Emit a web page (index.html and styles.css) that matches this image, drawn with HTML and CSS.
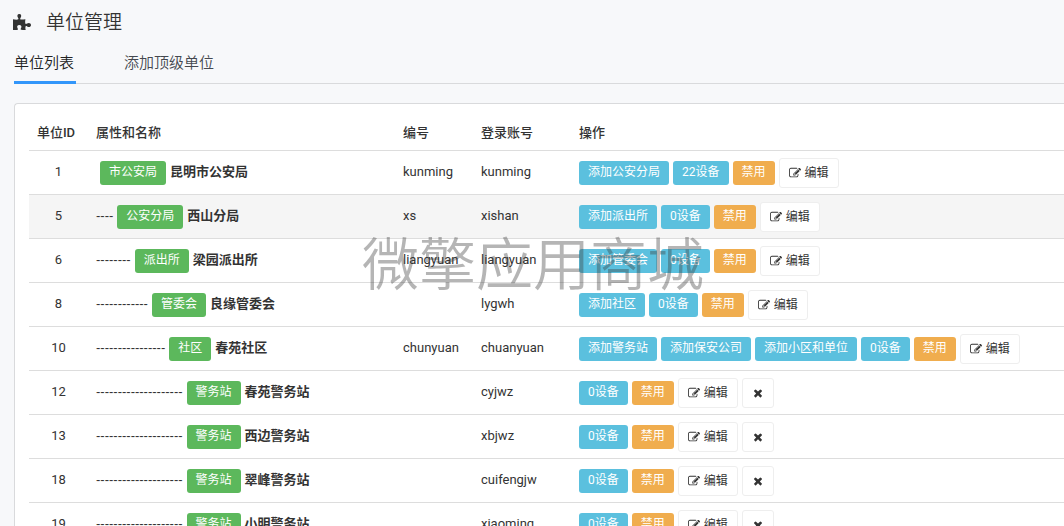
FILE: index.html
```
<!DOCTYPE html>
<html lang="zh-CN">
<head>
<meta charset="utf-8">
<title>单位管理</title>
<link rel="stylesheet" href="styles.css">
</head>
<body>
<svg class="sprite" aria-hidden="true">
  <symbol id="edit" viewBox="0 0 1792 1792"><path d="M888 1184l116-116-152-152-116 116v56h96v96h56zm440-720q-16-16-33 1l-350 350q-17 17-1 33t33-1l350-350q17-17 1-33zm80 594v190q0 119-84.5 203.5t-203.5 84.5h-832q-119 0-203.5-84.5t-84.5-203.5v-832q0-119 84.5-203.5t203.5-84.5h832q63 0 117 25 15 7 18 23 3 17-9 29l-49 49q-14 14-32 8-23-6-45-6h-832q-66 0-113 47t-47 113v832q0 66 47 113t113 47h832q66 0 113-47t47-113v-126q0-13 9-22l64-64q15-15 35-7t20 29zm-96-738l288 288-672 672h-288v-288zm444 132l-92 92-288-288 92-92q28-28 68-28t68 28l152 152q28 28 28 68t-28 68z"/></symbol>
  <symbol id="times" viewBox="0 0 1792 1792"><path d="M1490 1322q0 40-28 68l-136 136q-28 28-68 28t-68-28l-294-294-294 294q-28 28-68 28t-68-28l-136-136q-28-28-28-68t28-68l294-294-294-294q-28-28-28-68t28-68l136-136q28-28 68-28t68 28l294 294 294-294q28-28 68-28t68 28l136 136q28 28 28 68t-28 68l-294 294 294 294q28 28 28 68z"/></symbol>
</svg>
<header class="page-head">
  <svg class="puzzle" viewBox="0 0 18 18" aria-hidden="true"><path d="M0 6.2Q2.500 6.900 4.600 6.600C5.700 6.400 5.700 5.800 5 4.800C3.900 3.200 4.200 1 6.300 1S8.700 3.200 7.600 4.800C6.900 5.800 7 6.600 8.200 6.600Q10.500 6.600 12.400 6.200Q12 8.300 12.200 10C12.400 11.300 13.200 11.200 14.100 10.500C15.600 9.400 18 9.900 18 12S15.600 14.500 14.200 13.500C13.200 12.800 12.500 13 12.400 14.200Q12.300 15.800 12.700 17Q10.500 17.200 8.300 16.800C7.300 16.600 7.500 15.900 8 15.200C9 13.700 8.300 12 6.300 12S3.600 13.700 4.600 15.200C5.200 16.100 5.100 16.800 4 16.900Q2 17.200 0 16.900Z"/></svg>
  <h1 class="page-title">单位管理</h1>
</header>
<nav class="tabs">
  <a class="tab active" href="#">单位列表</a>
  <a class="tab" href="#">添加顶级单位</a>
</nav>
<main class="panel">
  <table class="units">
    <thead>
      <tr><th class="col-id">单位ID</th><th class="col-name">属性和名称</th><th class="col-code">编号</th><th class="col-account">登录账号</th><th>操作</th></tr>
    </thead>
    <tbody id="rows"></tbody>
  </table>
</main>
<div class="watermark">微擎应用商城</div>
<script src="app.js"></script>
</body>
</html>
```
FILE: app.js
```
const units = [
  [1, 0, '市公安局', '昆明市公安局', 'kunming', 'kunming', ['添加公安分局', '22设备']],
  [5, 1, '公安分局', '西山分局', 'xs', 'xishan', ['添加派出所', '0设备']],
  [6, 2, '派出所', '梁园派出所', 'liangyuan', 'liangyuan', ['添加管委会', '0设备']],
  [8, 3, '管委会', '良缘管委会', '', 'lygwh', ['添加社区', '0设备']],
  [10, 4, '社区', '春苑社区', 'chunyuan', 'chuanyuan', ['添加警务站', '添加保安公司', '添加小区和单位', '0设备']],
  [12, 5, '警务站', '春苑警务站', '', 'cyjwz', ['0设备']],
  [13, 5, '警务站', '西边警务站', '', 'xbjwz', ['0设备']],
  [18, 5, '警务站', '翠峰警务站', '', 'cuifengjw', ['0设备']],
  [19, 5, '警务站', '小明警务站', '', 'xiaoming', ['0设备']]
];
document.getElementById('rows').innerHTML = units.map(([id, depth, kind, name, code, account, links]) => `
  <tr class="${id === 5 ? 'hover' : ''}">
    <td class="col-id">${id}</td>
    <td class="cell-line"><div class="line"><span class="dashes">${'----'.repeat(depth)}</span><span class="label success">${kind}</span><strong class="name">${name}</strong></div></td>
    <td>${code}</td>
    <td>${account}</td>
    <td class="cell-line"><div class="line">
      ${links.map(text => `<a class="label info" href="#">${text}</a>`).join('')}
      <a class="label warning" href="#">禁用</a>
      <a class="btn" href="#"><svg class="icon" aria-hidden="true"><use href="#edit"/></svg>编辑</a>
      ${depth === 5 ? '<button class="btn remove" type="button" aria-label="删除"><svg class="icon" aria-hidden="true"><use href="#times"/></svg></button>' : ''}
    </div></td>
  </tr>`).join('');
```
FILE: styles.css
```
* { box-sizing: border-box; }
html { height: 100%; overflow: hidden; }
body {
  margin: 0;
  padding: 8px 0 0 13px;
  height: 100%;
  overflow: hidden;
  background: #f7f8fa;
  color: #333;
  font: 13px/20px Roboto, "Noto Sans CJK SC", sans-serif;
}
a { color: inherit; text-decoration: none; }
.sprite { display: none; }
.page-head { display: flex; align-items: center; gap: 15px; height: 28px; }
.puzzle { width: 18px; height: 18px; fill: #333; }
.page-title { margin: 0; padding-top: 1px; font-size: 19px; line-height: 28px; font-weight: 350; }
.tabs { display: flex; gap: 48px; margin-left: 1px; border-bottom: 1px solid #d9dadc; }
.tab {
  min-width: 62px;
  height: 48px;
  padding-top: 16px;
  margin-bottom: -1px;
  border-bottom: 3px solid transparent;
  color: #45484f;
  font-size: 15px;
  line-height: 22px;
  font-weight: 350;
}
.tab.active { border-color: #3296fa; color: #222; }
.panel {
  margin: 19px 0 0 1px;
  padding: 12px 0 0 14px;
  border: 1px solid #d9dadc;
  border-right: 0;
  border-radius: 4px 0 0 0;
  background: #fff;
}
.units { width: 100%; table-layout: fixed; border-collapse: separate; border-spacing: 0; }
.units th {
  height: 35px;
  padding: 0 8px;
  border-bottom: 1px solid #ddd;
  text-align: left;
  font-weight: 500;
}
.units td { height: 44px; padding: 5px 8px 7px; border-bottom: 1px solid #ddd; white-space: nowrap; }
.units .cell-line { padding: 7px 8px 6px; }
.units .col-id { width: 59px; text-align: center; }
.units th.col-id { padding: 0 12px 0 7px; white-space: nowrap; }
.units .col-name { width: 307px; }
.units .col-code { width: 78px; }
.units .col-account { width: 98px; }
.hover td { background: #f5f5f5; }
.line { display: flex; align-items: center; gap: 4px; height: 30px; }
.dashes, .name { padding-bottom: 2px; }
.dashes { font-family: "Liberation Sans", sans-serif; }
.label {
  height: 24px;
  padding: 0 9px;
  border-radius: 3px;
  color: #fff;
  font-size: 12px;
  line-height: 22px;
}
.success { background: #5cb85c; }
.info { background: #5bc0de; }
.warning { background: #f0ad4e; }
.name { font-weight: 700; }
.btn {
  display: flex;
  align-items: center;
  gap: 4px;
  height: 30px;
  padding: 0 9px;
  border: 1px solid #eee;
  border-radius: 3px;
  background: #fff;
  color: #333;
  font-size: 12px;
}
.icon { width: 12px; height: 12px; fill: currentColor; }
.watermark {
  position: absolute;
  top: 228px;
  left: 362px;
  color: rgba(60, 60, 60, .38);
  font: 350 57px/64px "Noto Sans CJK SC", sans-serif;
  white-space: nowrap;
  pointer-events: none;
}
```
